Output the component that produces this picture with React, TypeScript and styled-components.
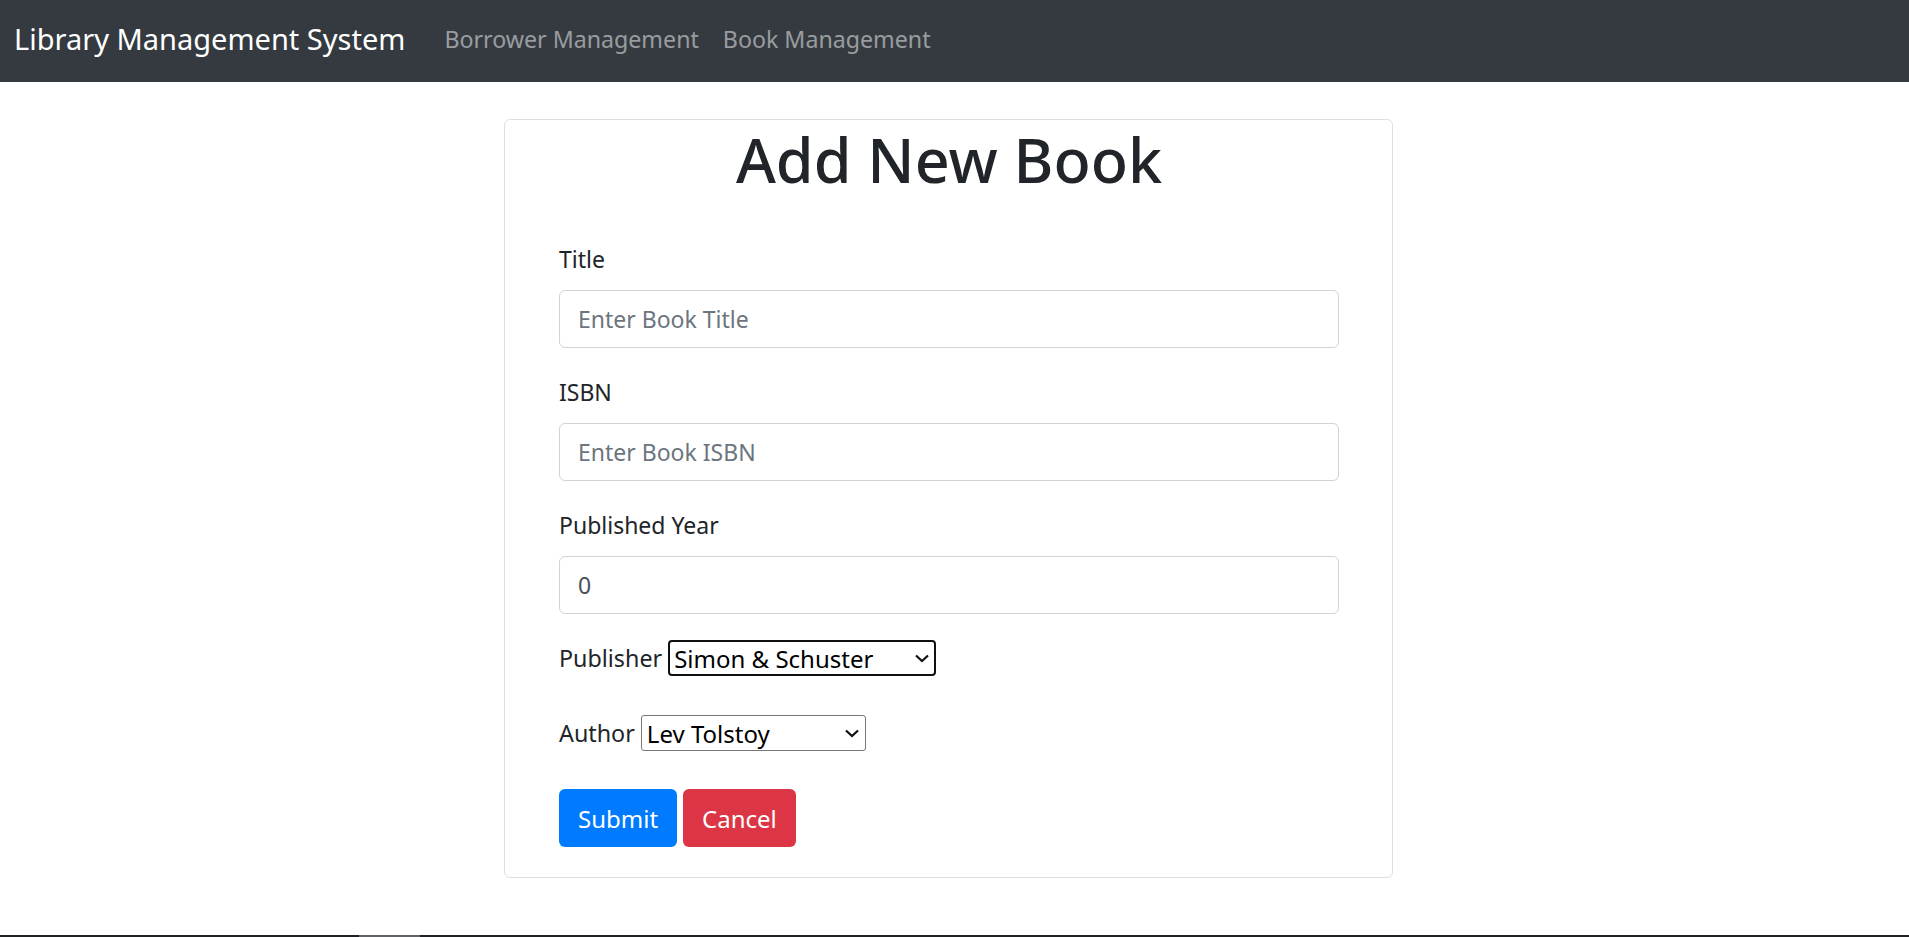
import React from "react";
import styled, { createGlobalStyle } from "styled-components";

const GlobalStyle = createGlobalStyle`
  html, body { margin: 0; padding: 0; }
  body {
    font-family: "Noto Sans", "Open Sans", sans-serif;
    font-size: 24px;
    line-height: 1.5;
    color: #212529;
    background: #fff;
  }
  * { box-sizing: border-box; }
`;

const Page = styled.div`
  min-height: 100vh;
  display: flex;
  flex-direction: column;
`;

const Navbar = styled.nav`
  height: 82px;
  background: #343a40;
  display: flex;
  align-items: center;
  padding: 0 14px 4px;
`;

const Brand = styled.a`
  font-size: 29px;
  color: #fff;
  margin-right: 27px;
  text-decoration: none;
`;

const NavLink = styled.a`
  font-size: 23.2px;
  color: rgba(255, 255, 255, 0.5);
  padding: 0 12px;
  text-decoration: none;
`;

const Main = styled.main`
  flex: 1;
  display: flex;
  justify-content: center;
  padding: 37px 12px 0 0;
`;

const Card = styled.div`
  width: 889px;
  height: 759px;
  border: 1px solid rgba(0, 0, 0, 0.125);
  border-radius: 6px;
  padding: 4px 53px 0 54px;
  display: flex;
  flex-direction: column;
`;

const Heading = styled.h1`
  margin: 0 0 45px;
  font-size: 61px;
  font-weight: 500;
  line-height: 72px;
  text-align: center;
  color: #212529;
`;

const Group = styled.div`
  display: flex;
  flex-direction: column;
  margin-bottom: 26px;
`;

const Label = styled.label`
  font-size: 23px;
  line-height: 36px;
  margin-bottom: 13px;
`;

const Input = styled.input`
  height: 58px;
  width: 100%;
  border: 1px solid #ced4da;
  border-radius: 6px;
  padding: 0 18px;
  font-family: inherit;
  font-size: 23px;
  color: #495057;
  outline: none;
  &::placeholder { color: #6c757d; opacity: 1; }
`;

const InlineRow = styled.div<{ $gap: number }>`
  display: flex;
  align-items: center;
  gap: 6px;
  height: 36px;
  margin-bottom: ${(p) => p.$gap}px;
`;

const InlineLabel = styled.label`
  font-size: 23.3px;
  line-height: 36px;
`;

const SelectWrap = styled.div<{ $width: number }>`
  position: relative;
  width: ${(p) => p.$width}px;
  height: 36px;
`;

const Select = styled.select<{ $focused?: boolean }>`
  appearance: none;
  -webkit-appearance: none;
  width: 100%;
  height: 100%;
  font-family: inherit;
  font-size: 24px;
  color: #000;
  background: #fff;
  padding: 0 30px 0 ${(p) => (p.$focused ? 4 : 5)}px;
  border: ${(p) => (p.$focused ? "2px solid #101010" : "1px solid #767676")};
  border-radius: ${(p) => (p.$focused ? 4 : 3)}px;
  outline: none;
`;

const Chevron = styled.svg`
  position: absolute;
  right: 6px;
  top: 50%;
  transform: translateY(-50%);
  pointer-events: none;
`;

const ButtonRow = styled.div`
  display: flex;
  gap: 6px;
`;

const Button = styled.button<{ $variant: "primary" | "danger" }>`
  height: 58px;
  padding: 0 19px;
  border: none;
  border-radius: 6px;
  font-family: inherit;
  font-size: 24px;
  color: #fff;
  background: ${(p) => (p.$variant === "primary" ? "#007bff" : "#dc3545")};
  cursor: pointer;
`;

const BottomStrip = styled.div`
  height: 2px;
  background: #202124;
  padding-left: 359px;
`;

const Thumb = styled.div`
  width: 61px;
  height: 100%;
  background: #5f6368;
`;

function ChevronIcon() {
  return (
    <Chevron width="16" height="10" viewBox="0 0 16 10">
      <path d="M2 2.5 L8 8 L14 2.5" fill="none" stroke="#111" strokeWidth="2.2" />
    </Chevron>
  );
}

export default function App() {
  return (
    <>
      <GlobalStyle />
      <Page>
        <Navbar>
          <Brand href="#">Library Management System</Brand>
          <NavLink href="#">Borrower Management</NavLink>
          <NavLink href="#">Book Management</NavLink>
        </Navbar>
        <Main>
          <Card>
            <Heading>Add New Book</Heading>
            <Group>
              <Label>Title</Label>
              <Input placeholder="Enter Book Title" />
            </Group>
            <Group>
              <Label>ISBN</Label>
              <Input placeholder="Enter Book ISBN" />
            </Group>
            <Group>
              <Label>Published Year</Label>
              <Input type="number" defaultValue="0" />
            </Group>
            <InlineRow $gap={39}>
              <InlineLabel>Publisher</InlineLabel>
              <SelectWrap $width={268}>
                <Select $focused defaultValue="Simon & Schuster">
                  <option>Simon &amp; Schuster</option>
                  <option>Penguin Random House</option>
                  <option>HarperCollins</option>
                </Select>
                <ChevronIcon />
              </SelectWrap>
            </InlineRow>
            <InlineRow $gap={38}>
              <InlineLabel>Author</InlineLabel>
              <SelectWrap $width={225}>
                <Select defaultValue="Lev Tolstoy">
                  <option>Lev Tolstoy</option>
                  <option>Fyodor Dostoevsky</option>
                </Select>
                <ChevronIcon />
              </SelectWrap>
            </InlineRow>
            <ButtonRow>
              <Button $variant="primary">Submit</Button>
              <Button $variant="danger">Cancel</Button>
            </ButtonRow>
          </Card>
        </Main>
        <BottomStrip>
          <Thumb />
        </BottomStrip>
      </Page>
    </>
  );
}
